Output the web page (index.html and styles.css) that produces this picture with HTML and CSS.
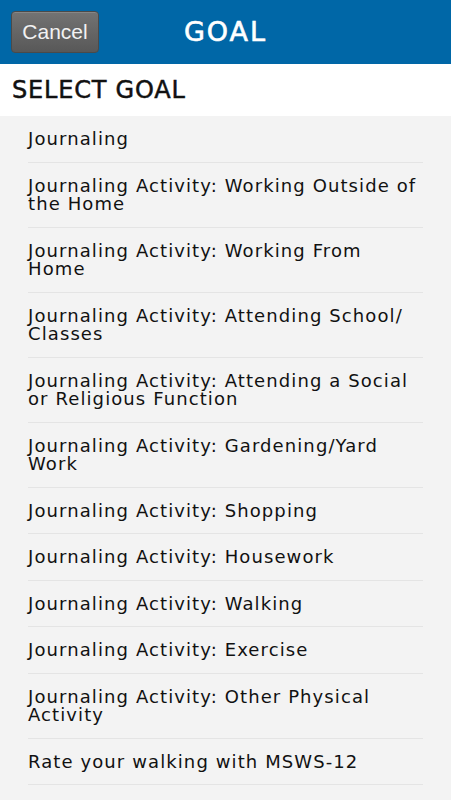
FILE: index.html
```html
<!DOCTYPE html>
<html>
<head>
<meta charset="utf-8">
<link rel="stylesheet" href="styles.css">
</head>
<body>
<header class="topbar">
  <button class="cancel">Cancel</button>
  <h1 class="title">GOAL</h1>
</header>
<div class="section-head">SELECT GOAL</div>
<ul class="goals">
  <li>Journaling</li>
  <li>Journaling Activity: Working Outside of the Home</li>
  <li>Journaling Activity: Working From Home</li>
  <li>Journaling Activity: Attending School/ Classes</li>
  <li>Journaling Activity: Attending a Social or Religious Function</li>
  <li>Journaling Activity: Gardening/Yard Work</li>
  <li>Journaling Activity: Shopping</li>
  <li>Journaling Activity: Housework</li>
  <li>Journaling Activity: Walking</li>
  <li>Journaling Activity: Exercise</li>
  <li>Journaling Activity: Other Physical Activity</li>
  <li>Rate your walking with MSWS-12</li>
</ul>
</body>
</html>
```
FILE: styles.css
```css
html, body {
  margin: 0;
  padding: 0;
  background: #f3f3f3;
  height: 100%;
}
body {
  font-family: "DejaVu Sans", sans-serif;
  overflow: hidden;
}
.topbar {
  height: 64px;
  background: #0067a7;
  position: relative;
  display: flex;
  align-items: center;
  justify-content: center;
}
.cancel {
  position: absolute;
  left: 11px;
  top: 11px;
  width: 88px;
  height: 42px;
  border: 1px solid #4a4a4a;
  border-radius: 4px;
  background: linear-gradient(#737373, #585858);
  color: #f2f2f2;
  font-family: "Liberation Sans", Arial, sans-serif;
  font-size: 21px;
  padding: 0;
  box-shadow: inset 0 1px 0 rgba(255,255,255,0.15);
}
.title {
  margin: 0 0 2px 0;
  color: #fff;
  font-family: "DejaVu Sans", sans-serif;
  font-weight: 400;
  -webkit-text-stroke: 0.6px #fff;
  font-size: 27px;
  letter-spacing: 2px;
}
.section-head {
  height: 52px;
  box-sizing: border-box;
  background: #fff;
  padding: 12px 0 0 12px;
  font-size: 24px;
  font-weight: 400;
  -webkit-text-stroke: 0.5px #111;
  letter-spacing: 0.8px;
  color: #111;
  line-height: 28px;
}
.goals {
  list-style: none;
  margin: 0;
  padding: 0 28px 0 28px;
}
.goals li {
  border-bottom: 1px solid #e4e4e4;
  padding: 14px 0 13px;
  font-size: 18px;
  line-height: 18.5px;
  letter-spacing: 1.1px;
  color: #111;
}
```
